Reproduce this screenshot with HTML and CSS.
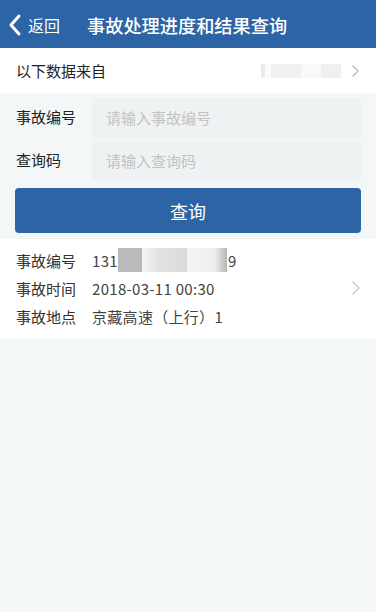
FILE: index.html
```html
<!DOCTYPE html>
<html lang="zh">
<head>
<meta charset="utf-8">
<link rel="stylesheet" href="styles.css">
</head>
<body>
<div class="app">
  <header class="nav">
    <div class="back">
      <svg class="back-icon" width="14" height="24" viewBox="0 0 14 24"><path d="M11 3 L3 12 L11 21" fill="none" stroke="#fff" stroke-width="3" stroke-linecap="round" stroke-linejoin="round"/></svg>
      <span>返回</span>
    </div>
    <div class="title">事故处理进度和结果查询</div>
  </header>
  <div class="source">
    <span>以下数据来自</span>
    <div class="source-right">
      <span class="blur-src"></span>
      <svg class="chev" width="9" height="14" viewBox="0 0 9 14"><path d="M1.5 1.5 L7 7 L1.5 12.5" fill="none" stroke="#b9b9b9" stroke-width="1.3"/></svg>
    </div>
  </div>
  <form class="form">
    <div class="field">
      <label>事故编号</label>
      <div class="input">请输入事故编号</div>
    </div>
    <div class="field">
      <label>查询码</label>
      <div class="input">请输入查询码</div>
    </div>
    <div class="btn">查询</div>
  </form>
  <div class="result">
    <div class="rows">
      <div class="row"><span class="k">事故编号</span><span class="v">131<span class="mask m1"></span><span class="mask m2"></span><span class="mask m3"></span>9</span></div>
      <div class="row"><span class="k">事故时间</span><span class="v">2018-03-11 00:30</span></div>
      <div class="row"><span class="k">事故地点</span><span class="v">京藏高速（上行）1</span></div>
    </div>
    <svg class="chev2" width="10" height="16" viewBox="0 0 10 16"><path d="M1.5 1.5 L8 8 L1.5 14.5" fill="none" stroke="#c4c4c4" stroke-width="1.3"/></svg>
  </div>
</div>
</body>
</html>
```
FILE: styles.css
```css
* { box-sizing: border-box; margin: 0; padding: 0; }
html, body { width: 376px; height: 612px; overflow: hidden; }
body {
  background: #f3f7f7;
  font-family: "Noto Sans CJK SC", "Noto Sans", sans-serif;
  color: #333;
}
.app { display: flex; flex-direction: column; height: 612px; }
.nav {
  height: 48px;
  background: #2c64a5;
  color: #fff;
  display: flex;
  align-items: center;
  padding-left: 8px;
  padding-top: 2px;
}
.back { display: flex; align-items: center; gap: 6px; font-size: 16px; width: 79px; }
.back-icon { display: block; }
.title { font-size: 18.2px; font-weight: 500; }
.source {
  height: 45px;
  background: #fff;
  display: flex;
  align-items: center;
  justify-content: space-between;
  padding: 0 16px 0 16px;
  font-size: 15px;
  color: #222;
}
.source-right { display: flex; align-items: center; gap: 10px; }
.blur-src {
  width: 80px; height: 14px;
  background: linear-gradient(90deg, #e6e6e6 0 4px, #fafafa 4px 10px, #ededed 10px 40px, #f7f7f7 40px 60px, #ececec 60px 80px);
  opacity: 0.8;
}
.chev { display: block; }
.form { padding: 3px 15px 6px 16px; }
.field { display: flex; align-items: center; height: 43px; }
.field label { width: 76px; font-size: 15px; color: #222; padding-bottom: 3px; }
.input {
  flex: 1;
  height: 40px;
  background: #eff2f2;
  display: flex;
  align-items: center;
  padding-left: 14px;
  font-size: 15px;
  color: #c2c2c2;
}
.btn {
  margin-top: 6px;
  height: 45px;
  background: #2c64a5;
  border-radius: 4px;
  color: #fff;
  font-size: 18px;
  display: flex;
  align-items: center;
  justify-content: center;
  margin-left: -1px;
}
.result {
  background: #fff;
  display: flex;
  align-items: center;
  justify-content: space-between;
  padding: 7px 15px 9px 16px;
}
.rows { display: flex; flex-direction: column; }
.row { height: 28px; display: flex; align-items: center; font-size: 15px; }
.k { width: 76px; color: #333; }
.v { color: #444; display: flex; align-items: center; letter-spacing: 0.3px; }
.mask { display: inline-block; height: 24px; }
.m1 { width: 24px; background: #a9a9a9; opacity: .8; }
.m2 { width: 45px; background: linear-gradient(90deg, #f4f4f4, #e2e2e2 40%, #dadada); }
.m3 { width: 40px; background: linear-gradient(90deg, #f5f5f5, #eeeeee 70%, #b5b5b5); margin-right: 1px; }
.chev2 { display: block; }
```
